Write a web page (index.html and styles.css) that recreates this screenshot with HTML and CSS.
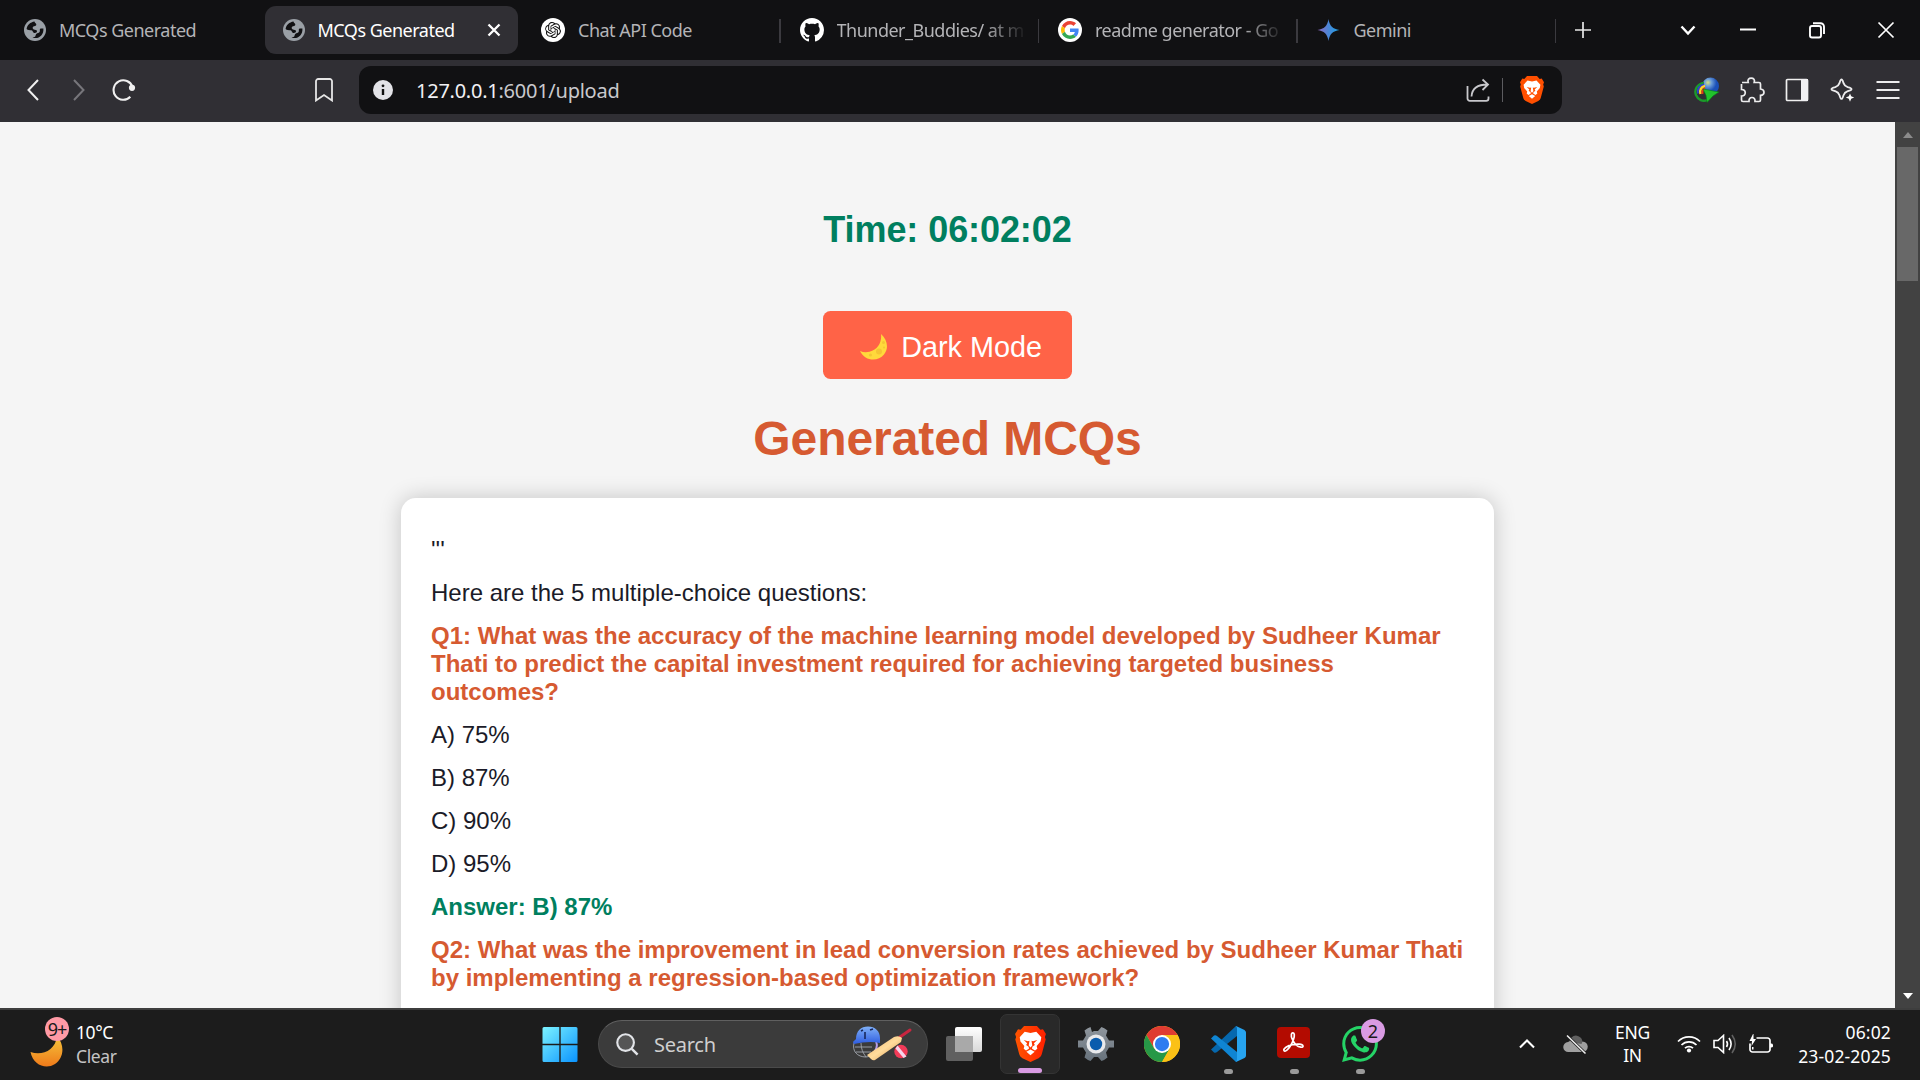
FILE: index.html
```html
<!DOCTYPE html>
<html lang="en">
<head>
<meta charset="utf-8">
<title>MCQs Generated</title>
<link rel="stylesheet" href="styles.css">
</head>
<body>
<svg class="defs" aria-hidden="true">
  <defs>
    <symbol id="globe" viewBox="0 0 22 22">
      <circle cx="11" cy="11" r="11" fill="#9aa0a6"/>
      <path d="M10.500 2.400C6.500 3 3 6 2.600 10c1.200 1.500 3 1 4.900 1.300 1.600.3 1 2.200 2.500 2.600 1.500.3 3.200-.2 3-1.800-.2-1.500-2-1.200-3.200-1.700C8 9.500 8.600 7.500 10 7.200c1.800-.3 2.600-.8 2.200-2.200-.3-1-1.400-1-1.700-2.600zM19.400 9.500c-1 .3-2.300-.4-3.200.3-1 .8.200 2-.6 3.200-.8 1.200-2.600 1-3.400 2.100-.7 1-.3 2.300-1.700 3-.6.300-1.500.3-2 .4 5.500 2.200 11.500-2 10.900-9z"/>
    </symbol>
    <symbol id="brave" viewBox="0 0 24 28">
      <path d="M7 0h10l2.700 3 2-.4L24 6.200l-.8 2.300.6 2-3 11.300c-.4 1.500-1.200 2.400-2.500 3.300L12 28l-6.300-2.900c-1.300-.9-2.100-1.800-2.500-3.300L.2 10.500l.6-2L0 6.200l2.300-3.600 2 .4z"/>
      <path fill="#fff" d="M12 5.500l4.500-1 3.900 4.300-.6 3.200-3 3.600.5 2-1.800 1.500-2.300-1.500.2-1.400 2-1.500-.8-1.200 2.700-2.600-3.300.9-1.200-.3.600 3.700L12 16.800l-1.400-1.600.6-3.700-1.200.3-3.300-.9 2.700 2.600-.8 1.200 2 1.500.2 1.400-2.300 1.500-1.800-1.500.5-2-3-3.600-.6-3.200 3.900-4.300z"/>
      <path fill="#fff" d="M12 18.200l3.200 1.900L12 22.800l-3.200-2.700z"/>
    </symbol>
    <linearGradient id="gem"><stop offset="0" stop-color="#9168c0"/><stop offset=".5" stop-color="#4a86d6"/><stop offset="1" stop-color="#1ba1e3"/></linearGradient>
    <linearGradient id="win" x1="0" y1="0" x2="1" y2="1"><stop offset="0" stop-color="#7cf3ff"/><stop offset="1" stop-color="#0a93ff"/></linearGradient>
    <linearGradient id="moonG" x1="0" y1="0" x2="0" y2="1"><stop offset="0" stop-color="#f5c63c"/><stop offset="1" stop-color="#ef7a1a"/></linearGradient>
    <linearGradient id="braveG"><stop offset="0" stop-color="#ff5500"/><stop offset="1" stop-color="#ff2000"/></linearGradient>
    <linearGradient id="gearG" x1="0" y1="0" x2="0" y2="1"><stop offset="0" stop-color="#8f969d"/><stop offset="1" stop-color="#67727c"/></linearGradient>
    <linearGradient id="whiteG" x1="0" y1="0" x2="0" y2="1"><stop offset="0" stop-color="#fff"/><stop offset="1" stop-color="#d8d8d8"/></linearGradient>
    <linearGradient id="helmG" x1="0" y1="0" x2="0" y2="1"><stop offset="0" stop-color="#7fb0f8"/><stop offset="1" stop-color="#2f5de0"/></linearGradient>
    <linearGradient id="batG" x1="0" y1="0" x2="1" y2="1"><stop offset="0" stop-color="#f0b068"/><stop offset=".5" stop-color="#ffdc9c"/><stop offset="1" stop-color="#d98f45"/></linearGradient>
    <radialGradient id="idmG" cx=".35" cy=".3"><stop offset="0" stop-color="#d9e07a"/><stop offset=".4" stop-color="#6fa0d8"/><stop offset="1" stop-color="#1b50b8"/></radialGradient>
  </defs>
</svg>

<header class="tabs">
  <div class="tab"><svg class="icon22"><use href="#globe"/></svg><span class="tab-title">MCQs Generated</span></div>
  <div class="tab active"><svg class="icon22"><use href="#globe"/></svg><span class="tab-title">MCQs Generated</span>
    <svg class="tab-close" viewBox="0 0 14 14"><path d="M1.500 1.500l11 11M12.500 1.500l-11 11" stroke="#fff" stroke-width="2.300"/></svg></div>
  <div class="tab sep"><svg class="icon24" viewBox="0 0 24 24"><circle cx="12" cy="12" r="12" fill="#fff"/><path transform="translate(4 4) scale(.667)" fill="#111" d="M22.2819 9.8211a5.9847 5.9847 0 0 0-.5157-4.9108 6.0462 6.0462 0 0 0-6.5098-2.9A6.0651 6.0651 0 0 0 4.9807 4.1818a5.9847 5.9847 0 0 0-3.9977 2.9 6.0462 6.0462 0 0 0 .7427 7.0966 5.98 5.98 0 0 0 .511 4.9107 6.051 6.051 0 0 0 6.5146 2.9001A5.9847 5.9847 0 0 0 13.2599 24a6.0557 6.0557 0 0 0 5.7718-4.2058 5.9894 5.9894 0 0 0 3.9977-2.9001 6.0557 6.0557 0 0 0-.7475-7.0729zm-9.022 12.6081a4.4755 4.4755 0 0 1-2.8764-1.0408l.1419-.0804 4.7783-2.7582a.7948.7948 0 0 0 .3927-.6813v-6.7369l2.02 1.1686a.071.071 0 0 1 .038.052v5.5826a4.504 4.504 0 0 1-4.4945 4.4944zm-9.6607-4.1254a4.4708 4.4708 0 0 1-.5346-3.0137l.142.0852 4.783 2.7582a.7712.7712 0 0 0 .7806 0l5.8428-3.3685v2.3324a.0804.0804 0 0 1-.0332.0615L9.74 19.9502a4.4992 4.4992 0 0 1-6.1408-1.6464zM2.3408 7.8956a4.485 4.485 0 0 1 2.3655-1.9728V11.6a.7664.7664 0 0 0 .3879.6765l5.8144 3.3543-2.0201 1.1685a.0757.0757 0 0 1-.071 0l-4.8303-2.7865A4.504 4.504 0 0 1 2.3408 7.872zm16.5963 3.8558L13.1038 8.364 15.1192 7.2a.0757.0757 0 0 1 .071 0l4.8303 2.7913a4.4944 4.4944 0 0 1-.6765 8.1042v-5.6772a.79.79 0 0 0-.407-.667zm2.0107-3.0231l-.142-.0852-4.7735-2.7818a.7759.7759 0 0 0-.7854 0L9.409 9.2297V6.8974a.0662.0662 0 0 1 .0284-.0615l4.8303-2.7866a4.4992 4.4992 0 0 1 6.6802 4.66zM8.3065 12.863l-2.02-1.1638a.0804.0804 0 0 1-.038-.0567V6.0742a4.4992 4.4992 0 0 1 7.3757-3.4537l-.142.0805L8.704 5.459a.7948.7948 0 0 0-.3927.6813zm1.0976-2.3654l2.602-1.4998 2.6069 1.4998v2.9994l-2.5974 1.4997-2.6067-1.4997Z"/></svg><span class="tab-title">Chat API Code</span></div>
  <div class="tab sep"><svg class="icon24" viewBox="0 0 16 16"><path fill="#fff" d="M8 0C3.58 0 0 3.58 0 8c0 3.540 2.290 6.530 5.470 7.590.4.070.55-.17.55-.38 0-.19-.01-.82-.01-1.490-2.010.37-2.530-.49-2.690-.94-.09-.23-.48-.94-.82-1.130-.28-.15-.68-.52-.01-.53.63-.01 1.080.58 1.230.82.72 1.210 1.870.87 2.330.66.070-.52.28-.87.51-1.070-1.780-.2-3.640-.89-3.640-3.950 0-.87.31-1.590.82-2.150-.08-.2-.36-1.020.08-2.120 0 0 .67-.21 2.200.82.64-.18 1.320-.27 2-.27s1.360.09 2 .27c1.530-1.040 2.200-.82 2.200-.82.44 1.100.16 1.920.08 2.120.51.56.82 1.270.82 2.150 0 3.070-1.870 3.750-3.650 3.950.29.25.54.73.54 1.480 0 1.070-.01 1.930-.01 2.200 0 .21.15.46.55.38A8.010 8.010 0 0 0 16 8c0-4.420-3.580-8-8-8z"/></svg><span class="tab-title fade">Thunder_Buddies/ at m</span></div>
  <div class="tab sep"><svg class="icon24" viewBox="0 0 24 24"><circle cx="12" cy="12" r="12" fill="#fff"/><g transform="translate(3 3) scale(.375)"><path fill="#EA4335" d="M24 9.500c3.540 0 6.710 1.220 9.210 3.600l6.850-6.850C35.900 2.380 30.470 0 24 0 14.620 0 6.510 5.380 2.560 13.220l7.980 6.190C12.430 13.720 17.740 9.500 24 9.500z"/><path fill="#4285F4" d="M46.980 24.550c0-1.570-.15-3.090-.38-4.550H24v9.020h12.940c-.58 2.960-2.260 5.480-4.780 7.180l7.730 6c4.510-4.180 7.090-10.360 7.090-17.650z"/><path fill="#FBBC05" d="M10.530 28.590c-.48-1.450-.76-2.990-.76-4.590s.27-3.140.76-4.590l-7.980-6.190C.92 16.460 0 20.120 0 24c0 3.880.92 7.540 2.560 10.780l7.970-6.190z"/><path fill="#34A853" d="M24 48c6.480 0 11.930-2.130 15.890-5.810l-7.730-6c-2.150 1.450-4.920 2.300-8.160 2.300-6.260 0-11.570-4.220-13.470-9.910l-7.980 6.190C6.510 42.620 14.620 48 24 48z"/></g></svg><span class="tab-title fade">readme generator - Go</span></div>
  <div class="tab sep"><svg class="icon24" viewBox="0 0 24 24"><path fill="url(#gem)" d="M11.500 1c.8 6.500 4.500 10.200 11 11-6.500.8-10.200 4.500-11 11-.8-6.500-4.500-10.200-11-11 6.500-.8 10.200-4.500 11-11z"/></svg><span class="tab-title">Gemini</span></div>
  <svg class="new-tab" viewBox="0 0 16 18"><path d="M8 1v16M0 9h16" stroke="#e8e8e8" stroke-width="1.700"/></svg>
  <div class="window-controls">
    <svg viewBox="0 0 20 20"><path d="M3.500 6.500l6.500 7 6.500-7" stroke-width="2.400"/></svg>
    <svg viewBox="0 0 20 20"><path d="M2 9.500h16" stroke-width="2"/></svg>
    <svg viewBox="0 0 20 20"><rect x="3" y="6" width="11" height="11.500" rx="2" stroke-width="1.900"/><path d="M6 3.200h7.500a3.500 3.500 0 0 1 3.500 3.500V14" stroke-width="1.900"/></svg>
    <svg viewBox="0 0 20 20"><path d="M2.500 2.500l15 15M17.500 2.500l-15 15" stroke-width="1.700"/></svg>
  </div>
</header>

<nav class="toolbar">
  <svg class="nav-btn back" viewBox="0 0 12 22"><path d="M11 1L1.500 11 11 21" stroke="#f0f0f0" stroke-width="2"/></svg>
  <svg class="nav-btn forward" viewBox="0 0 12 22"><path d="M1 1l9.500 10L1 21" stroke="#77767b" stroke-width="2"/></svg>
  <svg class="reload" viewBox="0 0 24 24"><path d="M18.300 18.700A9.700 9.700 0 1 1 20.500 9" stroke="#f0f0f0" stroke-width="2.100"/><circle cx="20" cy="9.800" r="3.100" fill="#f0f0f0"/></svg>
  <svg class="bookmark" viewBox="0 0 18 24"><path d="M1 22V3.500A2.300 2.300 0 0 1 3.300 1h11.400A2.300 2.300 0 0 1 17 3.500V22.500l-8-5.500-8 5.500z" stroke="#e6e6e6" stroke-width="1.800"/></svg>
  <div class="address">
    <svg class="info" viewBox="0 0 20 20"><circle cx="10" cy="10" r="10" fill="#e3e3e8"/><circle cx="10" cy="5.800" r="1.400" fill="#111"/><path d="M10 9v6" stroke="#111" stroke-width="2.400"/></svg>
    <span class="url"><span class="host">127.0.0.1</span>:6001/upload</span>
    <svg class="share" viewBox="0 0 24 24"><path d="M1.500 8v12.500A2.300 2.300 0 0 0 3.800 22.800h16.400a2.300 2.300 0 0 0 2.300-2.300v-2M5.500 18.500C6 11 10.500 6.500 21.500 6.500M16.500 1.500l5.500 5-5.500 5.500" stroke="#c8c8cc" stroke-width="1.800"/></svg>
    <span class="bar"></span>
    <svg class="shield" viewBox="0 0 24 28"><use href="#brave" width="24" height="28" fill="#ff4f00"/></svg>
  </div>
  <div class="actions">
    <svg viewBox="0 0 26 26"><circle cx="16.500" cy="9" r="8.500" fill="url(#idmG)"/><path d="M10 6C3 7 0 13 2 18s7 7 11 5" fill="none" stroke="#1b9a2b" stroke-width="2.400"/><path d="M10 7.500c-5 1-7 5-6 9" stroke="#3040d0" stroke-width="2"/><path d="M11 9c-4 1-5.500 4-4.500 8" stroke="#ffd52a" stroke-width="2.500"/><path d="M11 11c-2 1-3 3-2.500 6" stroke="#e33b17" stroke-width="2"/><path d="M9 12l16 3-6 4-6 6.500-1-7z" fill="#21c22c" stroke="#087a16" stroke-width=".6"/></svg>
    <svg viewBox="0 0 26 26"><path d="M3 5.500h6.200c-.9-2.700.6-4.300 3-4.300s3.900 1.600 3 4.300H20A1.500 1.500 0 0 1 21.500 7v5c2.300.2 3.500 1.200 3.500 3.200s-1.200 3-3.500 3.200V23a1.500 1.500 0 0 1-1.500 1.500h-4c.2-2.500-1-4-3-4s-3.200 1.500-3 4H4A1.500 1.500 0 0 1 2.500 23v-4c5 .3 5-6.500 0-6.500V7" stroke="#ededee" stroke-width="1.700"/></svg>
    <svg viewBox="0 0 26 26"><rect x="2.500" y="2.500" width="21" height="21" rx="1" stroke="#f0f0f0" stroke-width="1.700"/><path d="M17 2h7v22h-7z" fill="#f0f0f2"/></svg>
    <svg viewBox="0 0 26 26"><path d="M11.500 2.500c1 0 1.300 1.300 1.900 3.400.9 2.700 1.600 3.400 4.300 4.300 2 .6 3.800.9 3.800 2s-1.800 1.400-3.800 2c-2.700.9-3.400 1.600-4.300 4.300-.6 2.100-.9 3.400-1.900 3.400s-1.300-1.300-1.900-3.400c-.9-2.700-1.600-3.400-4.300-4.300-2-.6-3.800-.9-3.800-2s1.800-1.400 3.800-2c2.700-.9 3.400-1.600 4.300-4.300.6-2.100.9-3.400 1.900-3.400z" stroke="#ededee" stroke-width="1.800"/><path d="M20 16.500l1.200 2.800 3 1.200-3 1.200-1.200 3-1.200-3-3-1.200 3-1.200z" fill="#fff"/></svg>
    <svg viewBox="0 0 26 26"><path d="M1.500 5h23M1.500 13h23M1.500 21h23" stroke="#ededee" stroke-width="2"/></svg>
  </div>
</nav>

<main class="viewport">
  <section class="page">
    <div class="clock">Time: 06:02:02</div>
    <button class="mode"><svg class="crescent" viewBox="0 0 27 26"><path d="M21 0c6.500 6 8 14 3 20.500-6 7.500-19 7-24-3.500 3 1.200 6 1.600 9.500.7C18 15.500 22 8 21 0z" fill="#ffd93b"/><circle cx="19" cy="17.500" r="3" fill="#f5c534"/><circle cx="10.500" cy="21" r="1.600" fill="#f5c534"/><circle cx="23.500" cy="8.500" r="1.500" fill="#f5c534"/><circle cx="24" cy="13.500" r="1" fill="#f5c534"/></svg><span>Dark Mode</span></button>
    <h1>Generated MCQs</h1>
    <article class="card">
      <p>'''</p>
      <p>Here are the 5 multiple-choice questions:</p>
      <p class="question">Q1: What was the accuracy of the machine learning model developed by Sudheer Kumar Thati to predict the capital investment required for achieving targeted business outcomes?</p>
      <p>A) 75%</p>
      <p>B) 87%</p>
      <p>C) 90%</p>
      <p>D) 95%</p>
      <p class="answer">Answer: B) 87%</p>
      <p class="question">Q2: What was the improvement in lead conversion rates achieved by Sudheer Kumar Thati by implementing a regression-based optimization framework?</p>
    </article>
  </section>
  <aside class="scrollbar"><span class="up"></span><span class="thumb"></span><span class="down"></span></aside>
</main>

<footer class="taskbar">
  <div class="weather">
    <div class="weather-icon"><svg viewBox="0 0 34 36"><path d="M27 4c8 9 7 22-2 28C16 38 3 33 .5 20c11 4 25-1 26.500-16z" fill="url(#moonG)"/></svg><span class="badge pink">9+</span></div>
    <div class="weather-text"><span>10°C</span><span class="dim">Clear</span></div>
  </div>
  <div class="apps">
    <svg class="start" viewBox="0 0 35 35"><path fill="url(#win)" d="M1.500 0H16.800V16.800H0V1.500A1.500 1.500 0 0 1 1.500 0zM18.200 0H33.500A1.500 1.500 0 0 1 35 1.500V16.800H18.200zM0 18.200H16.800V35H1.500A1.500 1.500 0 0 1 0 33.500zM18.200 18.200H35V33.500A1.500 1.500 0 0 1 33.500 35H18.200z"/></svg>
    <div class="search">
      <svg class="lens" viewBox="0 0 24 24"><circle cx="10" cy="10" r="8.700" fill="#555" stroke="#e2e4e8" stroke-width="2.200"/><path d="M16.500 16.500l6 6" stroke="#e2e4e8" stroke-width="2.600"/></svg>
      <span>Search</span>
      <svg class="cricket" viewBox="0 0 60 36"><g stroke="#a2a6ae" stroke-width=".9"><path d="M2 17c-2 8 3 14 12 14l6-1M3 21h17M4 26h15M9 17c0 6 2 10 5 14"/></g><path d="M24 15c2 5 1 9-4 14" stroke="#b79ce8" stroke-width="2"/><path d="M1 16.500C1 15 3 14.500 4 13 4 5 9 .5 16 .5S28 5 28 12v5c-8-2-17-1-26 1z" fill="url(#helmG)"/><path d="M13 6v7M18 4l3-1M9 5l2-1" stroke="#18275c" stroke-width="1.600"/><path d="M48 11l10-7" stroke="#c9263f" stroke-width="3" stroke-linecap="round"/><path d="M15 29l27-18q5-2 8 1l-1 4-26 18q-2 1-4-1z" fill="url(#batG)"/><circle cx="49" cy="25.500" r="6.700" fill="#f23b58"/><path d="M43.500 22.500l8 9.500 3-1.500-9-11z" fill="#f5d5ec"/></svg>
    </div>
    <svg class="taskview" viewBox="0 0 36 34"><rect y="9" width="27" height="25" rx="2" fill="#606060"/><rect x="9" width="27" height="25" rx="2" fill="url(#whiteG)"/><path d="M9 9h18v16H9z" fill="#a9a9a9"/></svg>
    <div class="app selected"><svg class="lion" viewBox="0 0 24 28"><use href="#brave" width="24" height="28" fill="url(#braveG)"/></svg><i class="dot wide"></i></div>
    <div class="app"><svg viewBox="0 0 36 36"><path fill="url(#gearG)" d="M14 6l-1.500-5a18 18 0 0 0-6 3.500l1.500 5-3 5H0a18 18 0 0 0 0 7h5l3 5-1.500 5a18 18 0 0 0 6 3.500L16 31h4l3.500 4a18 18 0 0 0 6-3.500l-1.500-5 3-5h5a18 18 0 0 0 0-7h-5l-3-5 1.500-5a18 18 0 0 0-6-3.500L20 5h-4z"/><circle cx="18" cy="18" r="9.500" fill="#e9eaec"/><circle cx="18" cy="18" r="6.200" fill="#0a5cad"/></svg></div>
    <div class="app"><svg viewBox="0 0 48 48"><circle cx="24" cy="24" r="24" fill="#fbc116"/><path d="M3.200 12A24 24 0 0 1 44.800 12H24L13.600 30z" fill="#df3b32"/><path d="M3.200 12A24 24 0 0 0 24 48L34.400 30 24 36 13.600 30z" fill="#279847"/><path d="M24 12h20.800A24 24 0 0 1 24 48l10.400-18z" fill="#fbc116"/><circle cx="24" cy="24" r="12" fill="#fff"/><circle cx="24" cy="24" r="9.500" fill="#2f7cf0"/></svg></div>
    <div class="app"><svg viewBox="0 0 36 36"><path d="M1 23.500l3 3q1.500.8 3-.4L27 10V.5L26 0z" fill="#0668ae"/><path d="M1 12.500l3-3q1.500-.8 3 .4L27 26v9.500L26 36z" fill="#0f85d3"/><path d="M26 0l8.500 4Q36 5 36 6.500v23q0 1.500-1.500 2.500L26 36q1-1 1-3V3q0-2-1-3z" fill="#27a4f0"/></svg><i class="dot"></i></div>
    <div class="app"><svg viewBox="0 0 36 36"><rect x="1" y="1" width="33" height="31" rx="4" fill="#b30b00"/><path d="M8 24.500c-1-1.800 3.500-4.800 8.500-5.800 4.500-1 10-.8 10.500 1.200.5 2-4 1.800-7-1-2.500-2.300-5.300-8-4.600-10.700.5-2 2.700-1.800 2.900.4.300 3.200-2.300 8.600-4.300 11.900-2 3.200-5 5.700-6 4z" stroke="#fff" stroke-width="1.700"/></svg><i class="dot"></i></div>
    <div class="app"><svg viewBox="0 0 24 24"><path fill="#25d366" d="M17.472 14.382c-.297-.149-1.758-.867-2.030-.967-.273-.099-.471-.148-.67.150-.197.297-.767.966-.94 1.164-.173.199-.347.223-.644.075-.297-.150-1.255-.463-2.390-1.475-.883-.788-1.480-1.761-1.653-2.059-.173-.297-.018-.458.130-.606.134-.133.298-.347.446-.520.149-.174.198-.298.298-.497.099-.198.050-.371-.025-.520-.075-.149-.669-1.612-.916-2.207-.242-.579-.487-.5-.669-.510-.173-.008-.371-.010-.570-.010-.198 0-.520.074-.792.372-.272.297-1.040 1.016-1.040 2.479 0 1.462 1.065 2.875 1.213 3.074.149.198 2.096 3.200 5.077 4.487.709.306 1.262.489 1.694.625.712.227 1.360.195 1.871.118.571-.085 1.758-.719 2.006-1.413.248-.694.248-1.289.173-1.413-.074-.124-.272-.198-.570-.347m-5.421 7.403h-.004a9.870 9.870 0 0 1-5.031-1.378l-.361-.214-3.741.982.998-3.648-.235-.374a9.860 9.860 0 0 1-1.510-5.260c.001-5.450 4.436-9.884 9.888-9.884 2.640 0 5.122 1.030 6.988 2.898a9.825 9.825 0 0 1 2.893 6.994c-.003 5.450-4.437 9.884-9.885 9.884m8.413-18.297A11.815 11.815 0 0 0 12.050 0C5.495 0 .160 5.335.157 11.892c0 2.096.547 4.142 1.588 5.945L.057 24l6.305-1.654a11.882 11.882 0 0 0 5.683 1.448h.005c6.554 0 11.890-5.335 11.893-11.893a11.821 11.821 0 0 0-3.480-8.413z"/></svg><span class="badge lilac">2</span><i class="dot"></i></div>
  </div>
  <div class="tray">
    <svg class="caret" viewBox="0 0 16 10"><path d="M1 8.500l7-7 7 7" stroke="#fff" stroke-width="2.100"/></svg>
    <svg class="cloud" viewBox="0 0 24 20"><path d="M8 3.500A6.500 6.500 0 0 1 19 8l5 4.500-9 5-13-4z" fill="#606060"/><path d="M5 18a5 5 0 0 1-.5-10A6.500 6.500 0 0 1 12 9l6 1 1-2.500a5 5 0 0 1 0 10.500z" fill="#a0a0a0"/><path d="M3.500 1.500L22 19.500" stroke="#1c1c1c" stroke-width="3"/><path d="M3.500 1.500L22 19.500" stroke="#f0f0f0" stroke-width="1.500"/></svg>
    <div class="lang"><span>ENG</span><span>IN</span></div>
    <svg class="wifi" viewBox="0 0 24 18"><path d="M1 6.500a15.600 15.600 0 0 1 22 0M4.500 10a10.600 10.600 0 0 1 15 0M8 13.200a5.700 5.700 0 0 1 8 0" stroke="#fff" stroke-width="1.700"/><circle cx="12" cy="15.500" r="2.100" fill="#fff"/></svg>
    <svg class="volume" viewBox="0 0 24 20"><path d="M1 6.500h4L10.500 1.500v17L5 13.500H1z" stroke="#fff" stroke-width="1.600"/><path d="M13.500 7q2 3 0 6M16 4q4.200 6 0 12" stroke="#fff" stroke-width="1.600"/><path d="M19 1q6.500 9 0 18" stroke="#606060" stroke-width="1.600"/></svg>
    <svg class="battery" viewBox="0 0 24 20"><path d="M7.500 4h11A2.500 2.500 0 0 1 21 6.500v9a2.500 2.500 0 0 1-2.500 2.500H3.500A2.500 2.500 0 0 1 1 15.500V9.500" stroke="#fff" stroke-width="1.700"/><path d="M21 9.500h1.200a1.500 1.500 0 0 1 0 4H21z" fill="#fff"/><path d="M4 0L.5 7H3l-.5 5L7 5H4.500V0zM3 13h1.500v2.500H3z" fill="#fff"/></svg>
    <div class="datetime"><span>06:02</span><span>23-02-2025</span></div>
  </div>
</footer>
</body>
</html>
```
FILE: styles.css
```css
* { box-sizing: border-box; }
body {
  margin: 0;
  width: 1920px;
  height: 1080px;
  overflow: hidden;
  display: flex;
  flex-direction: column;
  background: #1c1c1c;
  color: #fff;
  font-family: "Noto Sans", "Open Sans", sans-serif;
  font-size: 18px;
}
svg { display: block; flex: none; fill: none; }
.defs { position: absolute; width: 0; height: 0; }

/* Tab strip */
.tabs {
  height: 60px;
  flex: none;
  display: flex;
  align-items: center;
  gap: 5px;
  padding-left: 6px;
  background: #111113;
}
.tab {
  width: 253.500px;
  height: 48px;
  flex: none;
  display: flex;
  align-items: center;
  gap: 13px;
  padding-left: 18px;
  border-radius: 11px;
  color: #b4b4b7;
  position: relative;
}
.tab.active { background: #302f34; color: #fff; }
.tab.sep::after {
  content: "";
  position: absolute;
  right: -4px;
  top: 13px;
  width: 1.500px;
  height: 24px;
  background: #3b3a3f;
}
.icon22 { width: 22px; height: 22px; fill: #111113; }
.icon24 { width: 24px; height: 24px; }
.tab-title { white-space: nowrap; letter-spacing: -0.500px; }
.tab-title.fade {
  -webkit-mask-image: linear-gradient(90deg, #000 148px, transparent 190px);
  mask-image: linear-gradient(90deg, #000 148px, transparent 190px);
}
.tab-close { width: 14px; height: 14px; margin-left: auto; margin-right: 17px; }
.new-tab { width: 16px; height: 18px; margin-left: 18px; }
.window-controls { display: flex; gap: 49px; margin: 0 24px 0 auto; }
.window-controls svg { width: 20px; height: 20px; stroke: #fff; }
.window-controls svg:first-child { margin-right: -9px; }

/* Toolbar */
.toolbar {
  height: 62px;
  flex: none;
  display: flex;
  align-items: center;
  background: #302f34;
  padding: 0 19px 2px 27px;
}
.nav-btn { width: 12px; height: 22px; }
.forward { margin-left: 34px; }
.reload { width: 24px; height: 24px; margin-left: 27px; }
.bookmark { width: 18px; height: 24px; margin-left: 179px; margin-right: 26px; }
.address {
  width: 1203px;
  height: 48px;
  display: flex;
  align-items: center;
  background: #111113;
  border-radius: 12px;
  padding: 0 18px 0 14px;
}
.info { width: 20px; height: 20px; }
.url { font-size: 20px; margin-left: 23px; margin-right: auto; letter-spacing: -0.250px; color: #c9c9cd; }
.host { color: #f0f0f4; }
.share { width: 24px; height: 24px; }
.bar { width: 1.500px; height: 24px; background: #5c5c60; margin: 0 17px 0 12px; }
.shield { width: 24px; height: 28px; }
.actions { display: flex; gap: 19.300px; margin-left: auto; }
.actions svg { width: 26px; height: 26px; }

/* Page */
.viewport {
  height: 886px;
  flex: none;
  display: flex;
  overflow: hidden;
  font-family: "Liberation Sans", Arial, sans-serif;
}
.page {
  width: 1895px;
  display: flex;
  flex-direction: column;
  align-items: center;
  background: #f5f5f5;
  color: #1b1b28;
}
.clock { margin-top: 87px; font-size: 36px; line-height: 42px; letter-spacing: -0.080px; font-weight: bold; color: #007f5f; }
.mode {
  width: 249px;
  height: 68px;
  flex: none;
  margin-top: 60px;
  padding: 4px 30px 0 37px;
  display: flex;
  align-items: center;
  justify-content: space-between;
  border: 0;
  border-radius: 7.500px;
  background: #ff6347;
  color: #fff;
  font: 28.800px "Liberation Sans", Arial, sans-serif;
}
.crescent { width: 27px; height: 26px; }
h1 { margin: 32px 0 0; font-size: 48px; line-height: 56px; letter-spacing: -0.080px; color: #d65a31; }
.card {
  width: 1093px;
  height: 700px;
  flex: none;
  margin-top: 31px;
  padding: 38px 30px;
  border-radius: 15px;
  background: #fff;
  box-shadow: 0 0 22px rgba(0, 0, 0, .2);
  font-size: 24px;
  line-height: 28px;
}
.card p { margin: 0 0 15px; }
.question { color: #d65a31; font-weight: bold; }
.answer { color: #007f5f; font-weight: bold; }

.scrollbar {
  width: 25px;
  display: flex;
  flex-direction: column;
  align-items: center;
  background: #424242;
}
.up, .down { border: 5.500px solid transparent; }
.up { margin-top: 5px; border-bottom: 6px solid #8b8b8b; }
.down { margin-top: auto; margin-bottom: 4px; border-top: 6px solid #fff; }
.thumb { width: 21px; height: 134px; margin-top: 9px; background: #686868; }

/* Taskbar */
.taskbar {
  height: 72px;
  flex: none;
  display: flex;
  align-items: center;
  border-top: 2px solid #3e3e3e;
  padding-bottom: 2px;
  background: #1c1c1c;
}
.weather { display: flex; width: 542px; padding-left: 30px; }
.weather-icon { width: 34px; height: 48px; position: relative; padding-top: 12px; }
.weather-icon svg { width: 34px; height: 36px; }
.badge {
  position: absolute;
  width: 24px;
  height: 24px;
  border-radius: 50%;
  color: #1a1a1a;
  font-size: 18px;
  line-height: 24px;
  text-align: center;
}
.pink { left: 15px; top: -3px; background: #ff9aa6; letter-spacing: -1px; }
.lilac { left: 31px; top: 5px; background: #d99be3; }
.weather-text { display: flex; flex-direction: column; margin-left: 12px; line-height: 24px; font-size: 17.500px; letter-spacing: -0.400px; }
.dim { color: #c4c4c4; }
.apps { display: flex; align-items: center; }
.start { width: 36px; height: 35px; }
.search {
  width: 330px;
  height: 48px;
  margin-left: 20px;
  padding: 0 15px 0 17px;
  display: flex;
  align-items: center;
  border: 1.500px solid #4a4a4a;
  border-top-color: #606060;
  border-radius: 24px;
  background: #3b3b3b;
  color: #cfcfcf;
  font-size: 20px;
  letter-spacing: -0.250px;
}
.lens { width: 23px; height: 23px; margin-right: 15px; }
.cricket { width: 60px; height: 36px; margin-left: auto; }
.taskview { width: 36px; height: 34px; margin: 0 18px; }
.app {
  width: 60px;
  height: 60px;
  margin-right: 6px;
  position: relative;
  display: flex;
  align-items: center;
  justify-content: center;
  border-radius: 7px;
}
.app svg { width: 36px; height: 36px; }
.app .lion { width: 31px; height: 36px; }
.selected { background: #292929; border: 1.500px solid #343434; }
.dot { position: absolute; bottom: 0; width: 9px; height: 5px; border-radius: 3px; background: #9a9a9a; }
.dot.wide { width: 24px; bottom: 0; background: #d99be3; }
.tray { display: flex; align-items: center; margin-left: auto; padding-right: 29px; font-size: 17.500px; line-height: 24px; }
.caret { width: 16px; height: 10px; }
.cloud { width: 25px; height: 20px; margin: 0 27px 0 28px; }
.lang { width: 35px; display: flex; flex-direction: column; align-items: center; margin-right: 27px; line-height: 23px; letter-spacing: -0.300px; }
.wifi { width: 24px; height: 18px; }
.volume { width: 24px; height: 20px; margin-left: 12px; }
.battery { width: 24px; height: 20px; margin-left: 12px; }
.datetime { width: 118px; display: flex; flex-direction: column; align-items: flex-end; letter-spacing: 0.150px; white-space: nowrap; }
```
